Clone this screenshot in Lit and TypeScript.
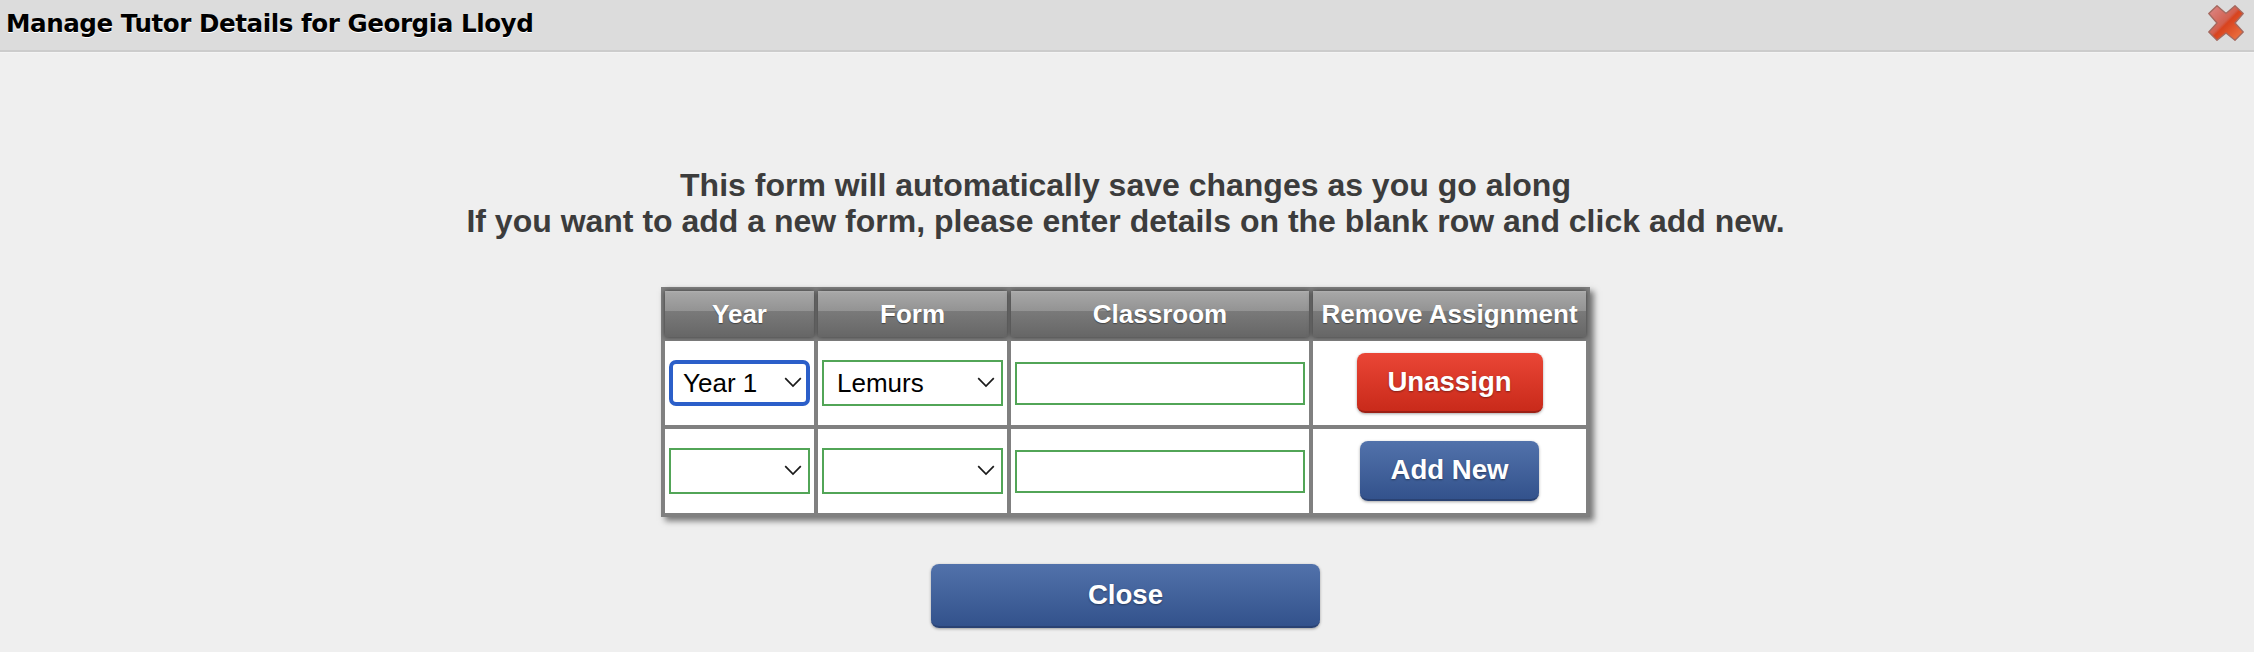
import { LitElement, html, css } from "lit";
import { customElement } from "lit/decorators.js";

const chevron = html`<svg class="chev" width="18" height="11" viewBox="0 0 18 11"><path d="M1.2 1.2 L9 9 L16.8 1.2" fill="none" stroke="#1a1a1a" stroke-width="1.7"/></svg>`;

@customElement("app-root")
export class AppRoot extends LitElement {
  static styles = css`
    :host { display: block; width: 2254px; height: 652px; overflow: hidden; background: #efefef; font-family: "Liberation Sans", Arial, sans-serif; }
    * { box-sizing: border-box; }
    .bar { height: 52px; background: #dcdcdc; border-bottom: 2px solid #cccccc; box-shadow: 0 1px 0 #f4f4f4; display: flex; align-items: center; justify-content: space-between; padding: 0 10px 4px 6px; }
    .title { font: bold 24.6px "DejaVu Sans", sans-serif; letter-spacing: -0.45px; color: #000; text-shadow: 0 1px 0 #fff; }
    .x { display: block; filter: blur(.5px); }
    .body { display: flex; flex-direction: column; align-items: center; padding-right: 3px; }
    .msg { margin-top: 115px; font-weight: bold; font-size: 32px; line-height: 36px; color: #3c3c3c; text-align: center; }
    table { margin-top: 48px; border-collapse: separate; border-spacing: 4px; background: #808080; box-shadow: 4px 4px 6px rgba(0,0,0,.5); table-layout: fixed; width: 929px; }
    th { height: 46px; padding: 0; color: #fff; font-size: 26px; font-weight: bold; text-shadow: 0 1px 1px rgba(0,0,0,.4);
      background: linear-gradient(#b0b0b0 0, #a6a6a6 2px, #939393 20px, #7a7a7a 20px, #666666 100%);
      box-shadow: 0 0 5px rgba(0,0,0,.6); }
    td { height: 84px; padding: 0 4px; background: #fff; text-align: center; vertical-align: middle; }
    .sel { position: relative; display: block; height: 46px; }
    .sel select { appearance: none; -webkit-appearance: none; width: 100%; height: 100%; background: #fff; border: 2px solid #52a557; border-radius: 0; padding: 0 0 0 13px; font: 26px "Liberation Sans", Arial, sans-serif; color: #000; outline: none; }
    .sel.focus select { border: 4px solid #2b5fc9; border-radius: 7px; padding-left: 10px; }
    .chev { position: absolute; right: 8px; top: 17px; pointer-events: none; }
    input { display: block; width: 100%; height: 43px; border: 2px solid #52a557; background: #fff; outline: none; padding: 0 8px; }
    .btn { display: inline-block; border: none; color: #fff; font: bold 27.6px "Liberation Sans", Arial, sans-serif; text-shadow: 0 1px 2px rgba(0,0,0,.4); border-radius: 8px; padding: 0; }
    .red { width: 186px; height: 60px; background: linear-gradient(#ea4636, #c92a1a); border-bottom: 2px solid #9c2015; box-shadow: 0 1px 3px rgba(0,0,0,.35); }
    .blue { background: linear-gradient(#5272ab, #33528c); border-bottom: 2px solid #2a4273; box-shadow: 0 1px 3px rgba(0,0,0,.35); }
    .add { width: 179px; height: 60px; }
    .close { width: 389px; height: 64px; margin-top: 47px; }
  `;

  render() {
    return html`
      <div class="bar">
        <div class="title">Manage Tutor Details for Georgia Lloyd</div>
        <svg class="x" width="36" height="36" viewBox="0 0 36 36">
          <defs>
            <linearGradient id="xg" x1="0" y1="0" x2="1" y2="1">
              <stop offset="0" stop-color="#dc8a8a"/>
              <stop offset=".46" stop-color="#d2604f"/>
              <stop offset=".52" stop-color="#d8431e"/>
              <stop offset="1" stop-color="#f07c48"/>
            </linearGradient>
          </defs>
          <path d="M9 .8 L18 8.5 L27 .8 L35.2 8.5 L27 18 L35.2 27 L27 35.2 L18 28 L9 35.2 L.8 27 L9 18 L.8 8.5 Z" fill="url(#xg)" stroke="#a5695f" stroke-width="1.4" stroke-linejoin="round"/>
        </svg>
      </div>
      <div class="body">
        <div class="msg">This form will automatically save changes as you go along<br>If you want to add a new form, please enter details on the blank row and click add new.</div>
        <table>
          <colgroup><col style="width:149px"><col style="width:189px"><col style="width:298px"><col style="width:273px"></colgroup>
          <thead><tr><th>Year</th><th>Form</th><th>Classroom</th><th>Remove Assignment</th></tr></thead>
          <tbody>
            <tr>
              <td><div class="sel focus"><select><option>Year 1</option></select>${chevron}</div></td>
              <td><div class="sel"><select><option>Lemurs</option></select>${chevron}</div></td>
              <td><input type="text"></td>
              <td><button class="btn red">Unassign</button></td>
            </tr>
            <tr>
              <td><div class="sel"><select><option></option></select>${chevron}</div></td>
              <td><div class="sel"><select><option></option></select>${chevron}</div></td>
              <td><input type="text"></td>
              <td><button class="btn blue add">Add New</button></td>
            </tr>
          </tbody>
        </table>
        <button class="btn blue close">Close</button>
      </div>
    `;
  }
}
